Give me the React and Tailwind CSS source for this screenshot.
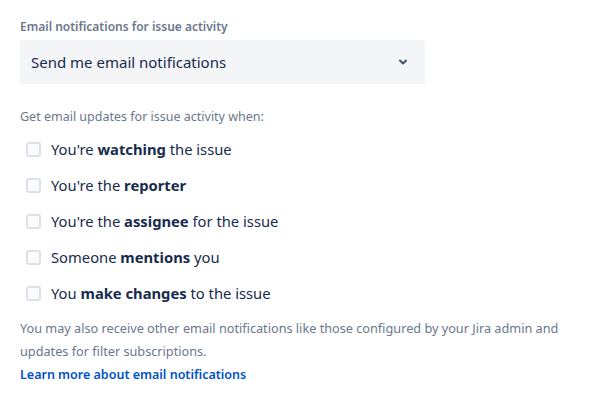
import React from 'react';

const options = [
  { pre: "You're ", bold: 'watching', post: ' the issue' },
  { pre: "You're the ", bold: 'reporter', post: '' },
  { pre: "You're the ", bold: 'assignee', post: ' for the issue' },
  { pre: 'Someone ', bold: 'mentions', post: ' you' },
  { pre: 'You ', bold: 'make changes', post: ' to the issue' },
];

const App = () => {
  return (
    <div className="min-h-screen bg-white px-5 pt-[19px] font-['Noto_Sans',sans-serif] text-[#172b4d]">
      <label className="block text-[12px] font-semibold leading-[16px] text-[#6b778c]">
        Email notifications for issue activity
      </label>
      <div className="mt-[5px] flex h-[44px] w-[405px] items-center justify-between rounded-[3px] bg-[#f4f5f7] pl-[11px] pr-[17px]">
        <span className="text-[15px] text-[#172b4d]">Send me email notifications</span>
        <svg className="h-[10px] w-[10px] text-[#42526e]" viewBox="0 0 10 10" fill="none">
          <path d="M2 3.5l3 3 3-3" stroke="currentColor" strokeWidth={2} strokeLinecap="round" strokeLinejoin="round" />
        </svg>
      </div>
      <p className="mt-[25px] text-[12.5px] leading-[16px] text-[#6b778c]">Get email updates for issue activity when:</p>
      <div className="mt-[6px] flex flex-col">
        {options.map((o) => (
          <label key={o.bold} className="flex h-[36px] items-center pl-[6px]">
            <span className="h-[15px] w-[15px] rounded-[3px] border-2 border-[#dfe1e6] bg-[#fafbfc]" />
            <span className="ml-[10px] text-[14.75px]">
              {o.pre}
              <b className="font-bold">{o.bold}</b>
              {o.post}
            </span>
          </label>
        ))}
      </div>
      <p className="mt-[6px] text-[12.7px] leading-[23px] text-[#6b778c]">
        You may also receive other email notifications like those configured by your Jira admin and updates for filter subscriptions.
      </p>
      <a href="#" className="block text-[12.5px] font-semibold leading-[23px] text-[#0052cc]">
        Learn more about email notifications
      </a>
    </div>
  );
};

export default App;
